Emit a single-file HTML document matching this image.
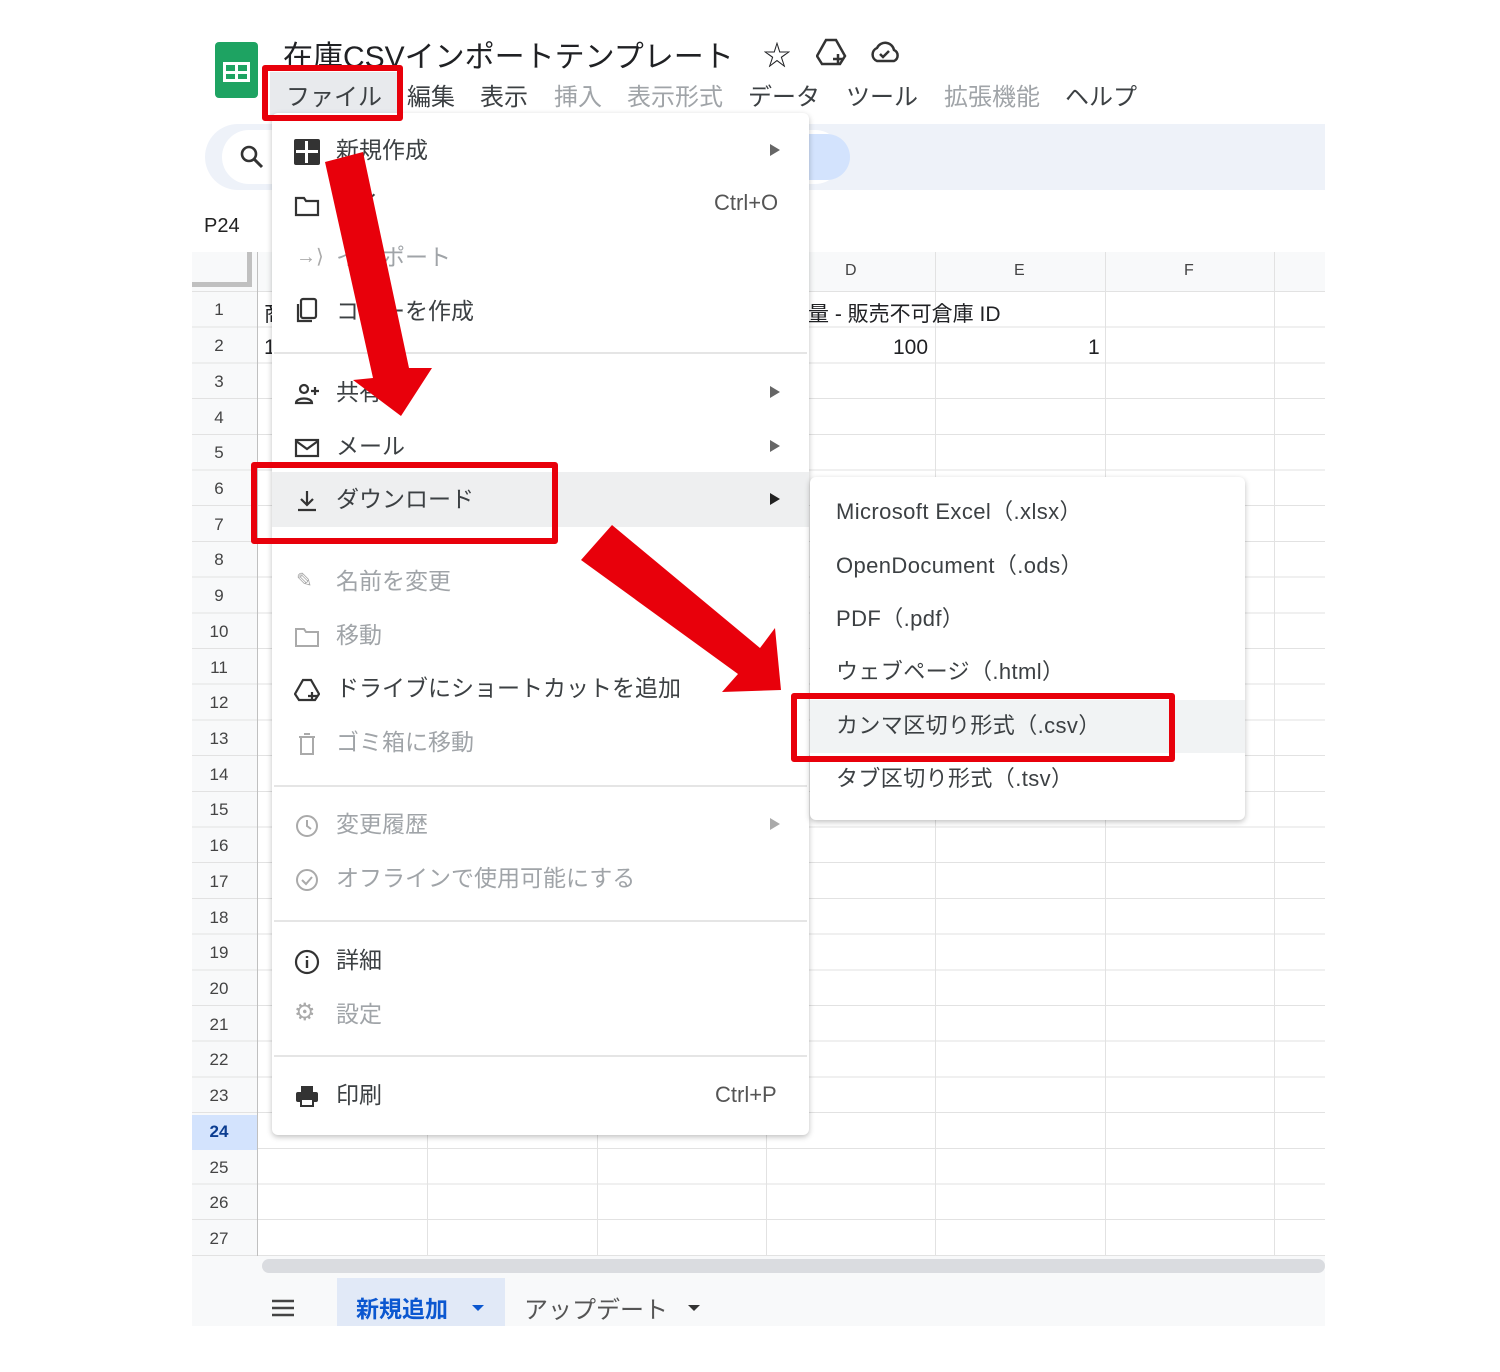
<!DOCTYPE html>
<html><head><meta charset="utf-8"><style>
*{margin:0;padding:0;box-sizing:border-box}
body{width:1500px;height:1372px;background:#fff;position:relative;overflow:hidden;font-family:"Liberation Sans","Noto Sans CJK JP",sans-serif;color:#202124}
.a{position:absolute;white-space:nowrap}
.mi{position:absolute;left:336px;font-size:23px;line-height:30px;color:#3c4043}
.g{color:#a0a4a8}
.ic{position:absolute;left:294px;width:26px;height:26px}
.sm{position:absolute;left:836px;font-size:22px;line-height:30px;color:#3c4043;letter-spacing:0.4px}
.rn{position:absolute;left:192px;width:54px;text-align:center;font-size:17px;color:#444}
.tri{position:absolute;left:770px;width:0;height:0;border-left:10px solid #666;border-top:6px solid transparent;border-bottom:6px solid transparent}
</style></head><body>
<div class="a" style="left:192px;top:25px;width:1133px;height:1300px;background:#fff"></div>
<!-- logo -->
<div class="a" style="left:215px;top:42px;width:43px;height:56px;background:#1ea362;border-radius:4px"></div>
<div class="a" style="left:223px;top:62px;width:27px;height:20px;border:3px solid #fff;background:linear-gradient(#fff,#fff) center/3px 100% no-repeat,linear-gradient(#fff,#fff) center/100% 3px no-repeat"></div>
<div class="a" style="left:283px;top:32px;font-size:30px;color:#202124">在庫CSVインポートテンプレート</div>
<div class="a" style="left:763px;top:34px;font-size:28px">☆</div>
<svg class="a" style="left:816px;top:38px" width="32" height="28" viewBox="0 0 32 28"><path d="M10 2h10l9 16-5 8H6L1 18z" fill="none" stroke="#333" stroke-width="2.5"/><path d="M22 16v10M17 21h10" stroke="#333" stroke-width="2.5"/></svg>
<svg class="a" style="left:868px;top:40px" width="34" height="24" viewBox="0 0 34 24"><path d="M9 21a7 7 0 0 1 0-13 9 9 0 0 1 17 2 6 6 0 0 1 0 11z" fill="none" stroke="#333" stroke-width="2.5"/><path d="M12 14l3 3 6-6" fill="none" stroke="#333" stroke-width="2.5"/></svg>
<div class="a" style="left:270px;top:72px;width:128px;height:44px;background:#e8eaed"></div>
<div class="a" style="left:286px;top:77px;font-size:24px;color:#3c4043">ファイル</div>
<div class="a" style="left:407px;top:77px;font-size:24px;color:#3c4043">編集</div>
<div class="a" style="left:480px;top:77px;font-size:24px;color:#3c4043">表示</div>
<div class="a" style="left:554px;top:77px;font-size:24px;color:#a0a4a8">挿入</div>
<div class="a" style="left:627px;top:77px;font-size:24px;color:#a0a4a8">表示形式</div>
<div class="a" style="left:748px;top:77px;font-size:24px;color:#3c4043">データ</div>
<div class="a" style="left:846px;top:77px;font-size:24px;color:#3c4043">ツール</div>
<div class="a" style="left:944px;top:77px;font-size:24px;color:#a0a4a8">拡張機能</div>
<div class="a" style="left:1065px;top:77px;font-size:24px;color:#3c4043">ヘルプ</div>
<!-- toolbar -->
<div class="a" style="left:205px;top:124px;width:1120px;height:66px;background:#eef2f9;border-radius:33px 0 0 33px"></div>
<div class="a" style="left:222px;top:130px;width:620px;height:54px;background:#fff;border-radius:27px"></div>
<div class="a" style="left:760px;top:134px;width:90px;height:46px;background:#d3e3fd;border-radius:23px"></div>
<svg class="a" style="left:238px;top:143px" width="28" height="28" viewBox="0 0 28 28"><circle cx="11" cy="11" r="7" fill="none" stroke="#333" stroke-width="2.6"/><path d="M16 16l8 8" stroke="#333" stroke-width="3"/></svg>
<div class="a" style="left:204px;top:215px;font-size:20px;color:#222">P24</div>
<!-- grid -->
<div class="a" style="left:192px;top:252px;width:1133px;height:1004px;background:
repeating-linear-gradient(to bottom,transparent 0,transparent 39px,#e2e2e2 39px,#e2e2e2 40px) 0 0/100% 40px no-repeat,
repeating-linear-gradient(to bottom,transparent 0,transparent 34.7px,#e2e2e2 34.7px,#e2e2e2 35.7px) 0 40px/100% 964px no-repeat,
linear-gradient(90deg,#f8f9fa,#f8f9fa) 0 0/65px 100% no-repeat,
linear-gradient(#f8f9fa,#f8f9fa) 0 0/100% 40px no-repeat"></div>
<div class="a" style="left:257px;top:252px;width:1px;height:1004px;background:#c0c0c0"></div>
<div class="a" style="left:427px;top:252px;width:1px;height:1004px;background:#e2e2e2"></div>
<div class="a" style="left:597px;top:252px;width:1px;height:1004px;background:#e2e2e2"></div>
<div class="a" style="left:766px;top:252px;width:1px;height:1004px;background:#e2e2e2"></div>
<div class="a" style="left:935px;top:252px;width:1px;height:1004px;background:#e2e2e2"></div>
<div class="a" style="left:1105px;top:252px;width:1px;height:1004px;background:#e2e2e2"></div>
<div class="a" style="left:1274px;top:252px;width:1px;height:1004px;background:#e2e2e2"></div>
<div class="a" style="left:192px;top:252px;width:60px;height:35px;border-right:5px solid #c0c0c0;border-bottom:5px solid #c0c0c0"></div>
<div class="a" style="left:845px;top:262px;font-size:16px;color:#444">D</div>
<div class="a" style="left:1014px;top:262px;font-size:16px;color:#444">E</div>
<div class="a" style="left:1184px;top:262px;font-size:16px;color:#444">F</div>
<div class="a" style="left:192px;top:1115px;width:65px;height:35px;background:#d3e3fd"></div>
<div class="a" style="left:808px;top:298px;font-size:21px">量 - 販売不可倉庫 ID</div>
<div class="a" style="left:893px;top:336px;font-size:21px">100</div>
<div class="a" style="left:1088px;top:336px;font-size:21px">1</div>
<div class="a" style="left:264px;top:298px;font-size:21px">商</div>
<div class="a" style="left:264px;top:336px;font-size:21px">1</div>
<div class="rn" style="top:300px">1</div><div class="rn" style="top:336px">2</div><div class="rn" style="top:372px">3</div><div class="rn" style="top:408px">4</div><div class="rn" style="top:443px">5</div><div class="rn" style="top:479px">6</div><div class="rn" style="top:515px">7</div><div class="rn" style="top:550px">8</div><div class="rn" style="top:586px">9</div><div class="rn" style="top:622px">10</div><div class="rn" style="top:658px">11</div><div class="rn" style="top:693px">12</div><div class="rn" style="top:729px">13</div><div class="rn" style="top:765px">14</div><div class="rn" style="top:800px">15</div><div class="rn" style="top:836px">16</div><div class="rn" style="top:872px">17</div><div class="rn" style="top:908px">18</div><div class="rn" style="top:943px">19</div><div class="rn" style="top:979px">20</div><div class="rn" style="top:1015px">21</div><div class="rn" style="top:1050px">22</div><div class="rn" style="top:1086px">23</div><div class="rn" style="top:1122px;font-weight:bold;color:#0b3d91">24</div><div class="rn" style="top:1158px">25</div><div class="rn" style="top:1193px">26</div><div class="rn" style="top:1229px">27</div>
<!-- scrollbar & tabs -->
<div class="a" style="left:192px;top:1256px;width:1133px;height:22px;background:#f8f9fa"></div>
<div class="a" style="left:262px;top:1259px;width:1063px;height:14px;background:#dadce0;border-radius:7px"></div>
<div class="a" style="left:192px;top:1278px;width:1133px;height:48px;background:#f8f9fa"></div>
<div class="a" style="left:337px;top:1278px;width:168px;height:48px;background:#e1e9f7"></div>
<svg class="a" style="left:271px;top:1299px" width="24" height="18" viewBox="0 0 24 18"><path d="M1 2h22M1 9h22M1 16h22" stroke="#444" stroke-width="2.6"/></svg>
<div class="a" style="left:356px;top:1290px;font-size:23px;color:#0b57d0;font-weight:bold">新規追加</div>
<div class="a" style="left:472px;top:1305px;border-top:6px solid #0b57d0;border-left:6px solid transparent;border-right:6px solid transparent"></div>
<div class="a" style="left:524px;top:1290px;font-size:24px;color:#555">アップデート</div>
<div class="a" style="left:688px;top:1305px;border-top:6px solid #333;border-left:6px solid transparent;border-right:6px solid transparent"></div>
<!-- menu -->
<div class="a" style="left:272px;top:113px;width:537px;height:1022px;background:#fff;border-radius:6px;box-shadow:0 2px 6px rgba(0,0,0,.25)"></div>
<div class="a" style="left:272px;top:472px;width:537px;height:55px;background:#eeeff0"></div>
<div class="a" style="left:274px;top:352px;width:533px;height:2px;background:#e5e5e5"></div>
<div class="a" style="left:274px;top:785px;width:533px;height:2px;background:#e5e5e5"></div>
<div class="a" style="left:274px;top:920px;width:533px;height:2px;background:#e5e5e5"></div>
<div class="a" style="left:274px;top:1055px;width:533px;height:2px;background:#e5e5e5"></div>
<div class="ic" style="top:139px;background:#333;border-radius:2px"></div>
<div class="a" style="left:296px;top:150px;width:22px;height:3px;background:#fff"></div><div class="a" style="left:305px;top:141px;width:3px;height:22px;background:#fff"></div>
<svg class="ic" style="top:193px" viewBox="0 0 26 26"><path d="M2 5h8l2 3h12v14H2z" fill="none" stroke="#333" stroke-width="2.2"/></svg>
<div class="a" style="left:296px;top:244px;font-size:20px;color:#aaa">→⟩</div>
<svg class="ic" style="top:297px" viewBox="0 0 26 26"><rect x="7" y="2" width="15" height="19" rx="2" fill="none" stroke="#333" stroke-width="2.2"/><path d="M4 7v17h14" fill="none" stroke="#333" stroke-width="2.2"/></svg>
<svg class="ic" style="top:381px" viewBox="0 0 26 26"><circle cx="10" cy="8" r="4" fill="none" stroke="#333" stroke-width="2.2"/><path d="M2 22c0-6 16-6 16 0z" fill="none" stroke="#333" stroke-width="2.2"/><path d="M21 6v8M17 10h8" stroke="#333" stroke-width="2.2"/></svg>
<svg class="ic" style="top:435px" viewBox="0 0 26 26"><rect x="2" y="5" width="22" height="16" fill="none" stroke="#333" stroke-width="2.2"/><path d="M2 6l11 8 11-8" fill="none" stroke="#333" stroke-width="2.2"/></svg>
<svg class="ic" style="top:488px" viewBox="0 0 26 26"><path d="M13 3v13M7 11l6 6 6-6M4 22h18" fill="none" stroke="#333" stroke-width="2.2"/></svg>
<div class="a" style="left:296px;top:568px;font-size:20px;color:#aaa">✎</div>
<svg class="ic" style="top:624px" viewBox="0 0 26 26"><path d="M2 5h8l2 3h12v14H2z" fill="none" stroke="#aaa" stroke-width="2"/></svg>
<svg class="ic" style="top:677px" viewBox="0 0 26 26"><path d="M9 3h8l8 14-4 6H5L1 17z" fill="none" stroke="#333" stroke-width="2.2"/><path d="M18 15v9M14 19h9" stroke="#333" stroke-width="2.2"/></svg>
<svg class="ic" style="top:731px" viewBox="0 0 26 26"><path d="M5 6h16M10 3h6M7 6v17h12V6" fill="none" stroke="#aaa" stroke-width="2"/></svg>
<svg class="ic" style="top:813px" viewBox="0 0 26 26"><circle cx="13" cy="13" r="10" fill="none" stroke="#aaa" stroke-width="2"/><path d="M13 7v6l4 3" fill="none" stroke="#aaa" stroke-width="2"/></svg>
<svg class="ic" style="top:867px" viewBox="0 0 26 26"><circle cx="13" cy="13" r="10" fill="none" stroke="#aaa" stroke-width="2"/><path d="M8 13l4 4 6-7" fill="none" stroke="#aaa" stroke-width="2"/></svg>
<svg class="ic" style="top:949px" viewBox="0 0 26 26"><circle cx="13" cy="13" r="11" fill="none" stroke="#333" stroke-width="2.2"/><path d="M13 11v8M13 7v2" stroke="#333" stroke-width="2.4"/></svg>
<div class="a" style="left:294px;top:998px;font-size:24px;color:#aaa">⚙</div>
<svg class="ic" style="top:1083px" viewBox="0 0 26 26"><rect x="7" y="3" width="12" height="6" fill="#333"/><rect x="2" y="9" width="22" height="10" rx="2" fill="#333"/><rect x="7" y="16" width="12" height="7" fill="#fff" stroke="#333" stroke-width="2"/></svg>
<div class="mi" style="top:135px">新規作成</div>
<div class="mi" style="top:189px">開く</div><div class="a" style="left:714px;top:190px;font-size:22px;color:#555">Ctrl+O</div>
<div class="mi g" style="top:242px">インポート</div>
<div class="mi" style="top:296px">コピーを作成</div>
<div class="mi" style="top:377px">共有</div>
<div class="mi" style="top:431px">メール</div>
<div class="mi" style="top:484px">ダウンロード</div>
<div class="mi g" style="top:566px">名前を変更</div>
<div class="mi g" style="top:620px">移動</div>
<div class="mi" style="top:673px">ドライブにショートカットを追加</div>
<div class="mi g" style="top:727px">ゴミ箱に移動</div>
<div class="mi g" style="top:809px">変更履歴</div>
<div class="mi g" style="top:863px">オフラインで使用可能にする</div>
<div class="mi" style="top:945px">詳細</div>
<div class="mi g" style="top:999px">設定</div>
<div class="mi" style="top:1080px">印刷</div><div class="a" style="left:715px;top:1082px;font-size:22px;color:#555">Ctrl+P</div>
<div class="tri" style="top:144px"></div><div class="tri" style="top:386px"></div><div class="tri" style="top:440px"></div><div class="tri" style="top:493px;border-left-color:#222"></div><div class="tri" style="top:818px;border-left-color:#aaa"></div>
<!-- submenu -->
<div class="a" style="left:810px;top:477px;width:435px;height:343px;background:#fff;border-radius:6px;box-shadow:0 2px 6px rgba(0,0,0,.25)"></div>
<div class="a" style="left:810px;top:700px;width:435px;height:53px;background:#f1f3f4"></div>
<div class="sm" style="top:497px">Microsoft Excel（.xlsx）</div>
<div class="sm" style="top:551px">OpenDocument（.ods）</div>
<div class="sm" style="top:604px">PDF（.pdf）</div>
<div class="sm" style="top:657px">ウェブページ（.html）</div>
<div class="sm" style="top:711px">カンマ区切り形式（.csv）</div>
<div class="sm" style="top:764px">タブ区切り形式（.tsv）</div>
<!-- red boxes -->
<div class="a" style="left:262px;top:65px;width:141px;height:56px;border:6px solid #e8000b;border-radius:3px"></div>
<div class="a" style="left:251px;top:462px;width:307px;height:82px;border:6px solid #e8000b;border-radius:3px"></div>
<div class="a" style="left:791px;top:693px;width:384px;height:69px;border:6px solid #e8000b;border-radius:3px"></div>
<svg class="a" style="left:0;top:0" width="1500" height="1372">
<polygon points="325,162 363,152 409,368 432,368 401,416 353,380 373,378" fill="#e8000b"/>
<polygon points="581,560 612,525 760,648 775,628 781,690 722,692 738,674" fill="#e8000b"/>
</svg>
</body></html>
